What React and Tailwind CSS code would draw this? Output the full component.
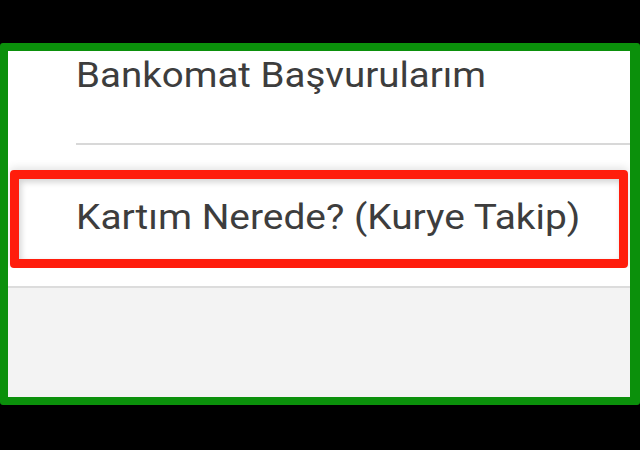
import React from 'react'

const font = { fontFamily: 'Roboto, "Noto Sans", sans-serif' }

export default function App() {
  return (
    <div className="w-[640px] h-[450px] bg-black pt-[43px]" style={font}>
      {/* green highlight frame around the list */}
      <div className="h-[362px] border-[8px] border-r-[10px] border-[#0b900b] rounded-[3px] bg-white flex flex-col overflow-hidden">
        <div className="h-[92px] pl-[68px] pt-[7px] text-[35px] leading-none text-[#3d3d3d] whitespace-nowrap">
          <span className="inline-block origin-left scale-x-[1.1]">Bankomat Başvurularım</span>
        </div>
        <div className="h-[2px] ml-[68px] bg-[#d8d8d8]" />

        <div className="h-[25px]" />

        {/* red marked item */}
        <div className="mx-[2px] h-[98px] border-[9px] border-[#ff1d0c] rounded-[4px] shadow-[0_-2px_8px_rgba(0,0,0,0.12)]">
          <div className="h-full bg-white shadow-[inset_2px_3px_6px_rgba(0,0,0,0.18)] pl-[57px] pt-[21px] text-[35px] leading-none text-[#3d3d3d] whitespace-nowrap">
            <span className="inline-block origin-left scale-x-[1.11]">Kartım Nerede? (Kurye Takip)</span>
          </div>
        </div>

        <div className="h-[18px] bg-white" />
        <div className="h-[2px] bg-[#dcdcdc]" />
        <div className="flex-1 bg-[#f3f3f3]" />
      </div>
    </div>
  )
}
